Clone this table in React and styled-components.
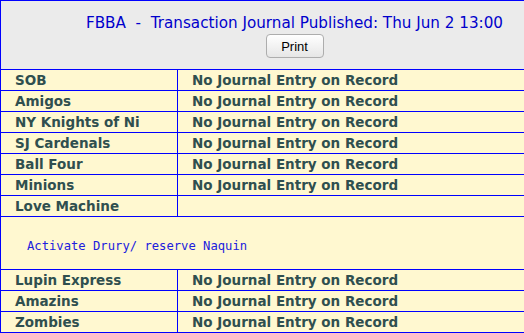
import React from 'react'
import styled, { createGlobalStyle } from 'styled-components'

const GlobalStyle = createGlobalStyle`
  html, body {
    margin: 0;
    padding: 0;
    background: #ffffff;
    overflow: hidden;
  }
`

const Page = styled.div`
  width: 532px;
  font-family: "DejaVu Sans", Verdana, sans-serif;
`

const Header = styled.div`
  box-sizing: border-box;
  height: 70px;
  border: 1px solid #0000ff;
  background: #ebebeb;
  display: flex;
  flex-direction: column;
  align-items: center;
  padding: 12px 0 0 57px;
`

const Title = styled.div`
  color: #0000cc;
  font-size: 15.2px;
  line-height: 20px;
  white-space: pre;
`

const PrintButton = styled.button`
  margin-top: 1px;
  width: 58px;
  height: 24px;
  font-family: "Liberation Sans", Arial, sans-serif;
  font-size: 13px;
  color: #000;
  border: 1px solid #adadad;
  border-radius: 4px;
  background: linear-gradient(#ffffff, #e6e6e6);
  padding: 0;
`

const Journal = styled.table`
  width: 100%;
  border-collapse: collapse;
  background: #fff8d0;
  margin-top: -1px;
`

const Cell = styled.td`
  border: 1px solid #0000ff;
  height: 21px;
  padding: 0 0 0 14px;
  box-sizing: border-box;
  font-size: 13.5px;
  font-weight: bold;
  color: #2f4f4f;
  white-space: nowrap;
  width: ${p => (p.$team ? '177px' : 'auto')};
`

const NoteCell = styled.td`
  border: 1px solid #0000ff;
  height: 53px;
  padding: 5px 0 0 26px;
  box-sizing: border-box;
`

const Note = styled.pre`
  margin: 0;
  font-family: "DejaVu Sans Mono", monospace;
  font-size: 12.2px;
  color: #2020dd;
`

const rows = [
  { team: 'SOB', entry: 'No Journal Entry on Record' },
  { team: 'Amigos', entry: 'No Journal Entry on Record' },
  { team: 'NY Knights of Ni', entry: 'No Journal Entry on Record' },
  { team: 'SJ Cardenals', entry: 'No Journal Entry on Record' },
  { team: 'Ball Four', entry: 'No Journal Entry on Record' },
  { team: 'Minions', entry: 'No Journal Entry on Record' },
  { team: 'Love Machine', entry: '', note: 'Activate Drury/ reserve Naquin' },
  { team: 'Lupin Express', entry: 'No Journal Entry on Record' },
  { team: 'Amazins', entry: 'No Journal Entry on Record' },
  { team: 'Zombies', entry: 'No Journal Entry on Record' },
]

export default function App() {
  return (
    <>
      <GlobalStyle />
      <Page>
        <Header>
          <Title>FBBA  -  Transaction Journal Published: Thu Jun 2 13:00</Title>
          <PrintButton>Print</PrintButton>
        </Header>
        <Journal>
          <tbody>
            {rows.map(r => (
              <React.Fragment key={r.team}>
                <tr>
                  <Cell $team>{r.team}</Cell>
                  <Cell>{r.entry}</Cell>
                </tr>
                {r.note && (
                  <tr>
                    <NoteCell colSpan={2}>
                      <Note>{r.note}</Note>
                    </NoteCell>
                  </tr>
                )}
              </React.Fragment>
            ))}
          </tbody>
        </Journal>
      </Page>
    </>
  )
}
